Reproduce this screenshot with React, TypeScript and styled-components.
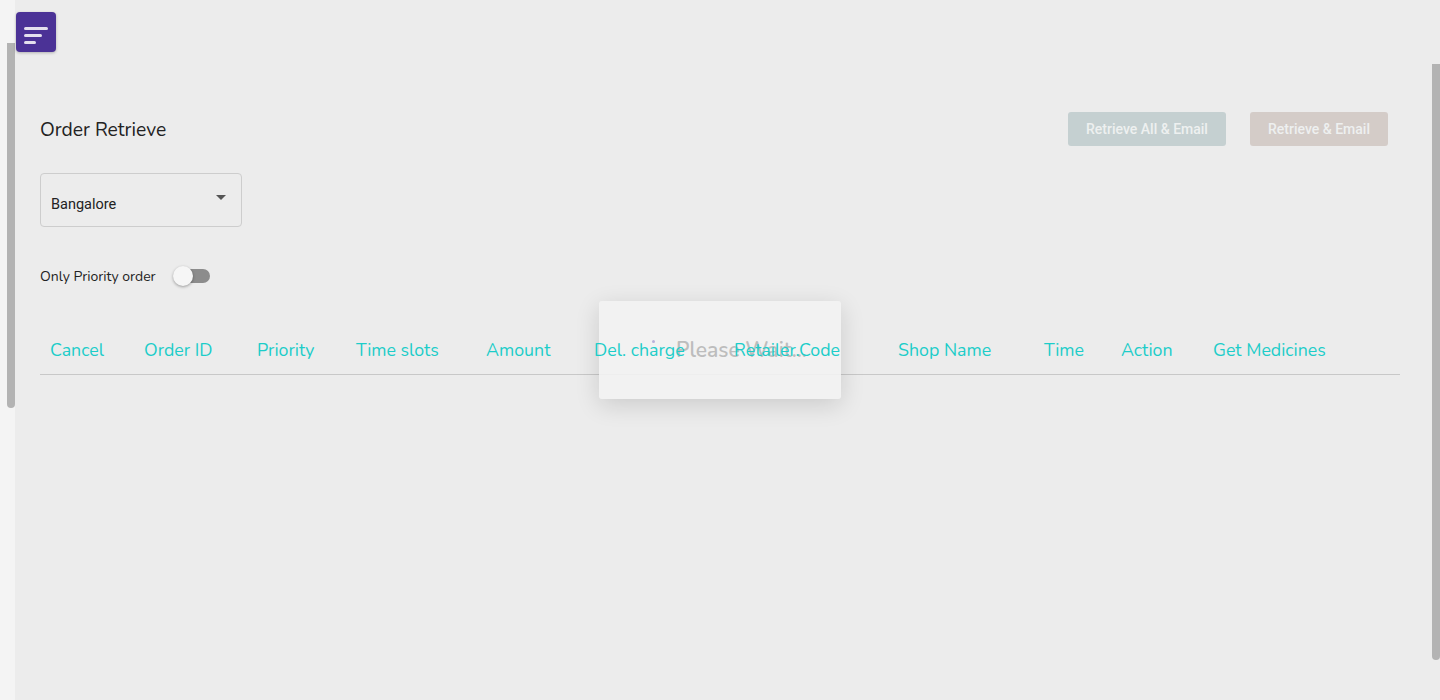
import React from "react";
import styled, { createGlobalStyle } from "styled-components";

const Global = createGlobalStyle`
  html, body { margin: 0; padding: 0; height: 100%; }
  body { background: #ececec; font-family: "Nunito", "Lato", "Open Sans", sans-serif; overflow: hidden; }
  #root { height: 700px; }
`;

const Shell = styled.div`
  display: flex;
  height: 700px;
  width: 1440px;
`;

const LeftRail = styled.div`
  width: 15px;
  flex: none;
  background: #f4f4f4;
  display: flex;
  flex-direction: column;
  align-items: flex-end;
`;

const Thumb = styled.div<{ $top: number; $h: number }>`
  width: 8px;
  margin-top: ${(p) => p.$top}px;
  height: ${(p) => p.$h}px;
  background: #b3b3b3;
  border-radius: 0 0 4px 4px;
`;

const Main = styled.div`
  flex: 1;
  display: flex;
  position: relative;
`;

const Content = styled.div`
  flex: 1;
  display: flex;
  flex-direction: column;
  padding: 0 0 0 25px;
`;

const RightRail = styled.div`
  width: 8px;
  flex: none;
  display: flex;
  flex-direction: column;
`;

const MenuButton = styled.button`
  position: absolute;
  left: 1px;
  top: 12px;
  width: 40px;
  height: 40px;
  border: none;
  border-radius: 4px;
  background: #4b3296;
  box-shadow: 0 1px 3px rgba(0, 0, 0, 0.25);
  display: flex;
  flex-direction: column;
  justify-content: center;
  align-items: flex-start;
  gap: 4px;
  padding: 6px 0 0 8px;
  cursor: pointer;
`;

const MenuLine = styled.span<{ $w: number }>`
  display: block;
  width: ${(p) => p.$w}px;
  height: 3px;
  border-radius: 2px;
  background: #e4e0ee;
`;

const HeaderRow = styled.div`
  display: flex;
  align-items: center;
  justify-content: space-between;
  margin-top: 112px;
  height: 34px;
  padding-right: 44px;
`;

const Title = styled.h1`
  margin: 0;
  font-size: 19.3px;
  font-weight: 400;
  color: #222;
  padding-top: 1px;
`;

const ButtonGroup = styled.div`
  display: flex;
  gap: 24px;
`;

const ActionButton = styled.button<{ $bg: string; $w: number }>`
  width: ${(p) => p.$w}px;
  height: 34px;
  border: none;
  border-radius: 3px;
  background: ${(p) => p.$bg};
  color: #eef0f0;
  font-family: Roboto, "Liberation Sans", sans-serif;
  font-size: 14px;
  font-weight: 500;
  padding: 0;
`;

const Select = styled.div`
  margin-top: 27px;
  border: 1px solid #cdcdcd;
  border-radius: 4px;
  display: flex;
  align-items: center;
  justify-content: space-between;
  padding: 8px 15px 0 10px;
  box-sizing: border-box;
  width: 202px;
  height: 54px;
  font-family: Roboto, "Liberation Sans", sans-serif;
  font-size: 14.5px;
  color: #222;
`;

const Caret = styled.span`
  width: 0;
  height: 0;
  border-left: 5px solid transparent;
  border-right: 5px solid transparent;
  border-top: 5px solid #555;
  margin-top: -14px;
`;

const ToggleRow = styled.div`
  display: flex;
  align-items: center;
  margin-top: 38px;
  height: 22px;
  gap: 20px;
  font-size: 14px;
  color: #222;
`;

const Track = styled.div`
  position: relative;
  width: 34px;
  height: 14px;
  border-radius: 7px;
  background: #8c8c8c;
`;

const Knob = styled.div`
  position: absolute;
  left: -3px;
  top: -3px;
  width: 20px;
  height: 20px;
  border-radius: 50%;
  background: #f6f6f6;
  box-shadow: 0 1px 3px rgba(0, 0, 0, 0.35);
`;

const Table = styled.div`
  margin-top: 40px;
  width: 1360px;
  display: grid;
  grid-template-columns: 94px 113px 99px 130px 108px 140px 164px 146px 77px 92px 197px;
  border-bottom: 1px solid #c8c8c8;
`;

const HeadCell = styled.div`
  padding: 11px 0 12px 10px;
  font-size: 17.8px;
  line-height: 24px;
  color: #1ccdc9;
  white-space: nowrap;
  position: relative;
  z-index: 2;
`;

const Dialog = styled.div`
  position: absolute;
  left: 584px;
  top: 301px;
  width: 242px;
  height: 98px;
  background: rgba(243, 243, 243, 0.88);
  border-radius: 3px;
  box-shadow: 0 6px 24px rgba(0, 0, 0, 0.14);
  display: flex;
  align-items: center;
  gap: 21px;
  padding-left: 53px;
  box-sizing: border-box;
  z-index: 1;
`;

const Spinner = styled.span`
  width: 3px;
  height: 3px;
  border-radius: 50%;
  background: #b9b0da;
  margin-top: -18px;
`;

const WaitText = styled.span`
  font-size: 21px;
  font-weight: 600;
  color: #bdbdbd;
  white-space: nowrap;
`;

const columns = [
  "Cancel",
  "Order ID",
  "Priority",
  "Time slots",
  "Amount",
  "Del. charge",
  "Retailer.Code",
  "Shop Name",
  "Time",
  "Action",
  "Get Medicines",
];

export default function App() {
  return (
    <>
      <Global />
      <Shell>
        <LeftRail>
          <Thumb $top={43} $h={365} />
        </LeftRail>
        <Main>
          <MenuButton aria-label="menu">
            <MenuLine $w={24} />
            <MenuLine $w={18} />
            <MenuLine $w={12} />
          </MenuButton>
          <Content>
            <HeaderRow>
              <Title>Order Retrieve</Title>
              <ButtonGroup>
                <ActionButton $bg="#c5d0d1" $w={158}>Retrieve All &amp; Email</ActionButton>
                <ActionButton $bg="#d4ccc8" $w={138}>Retrieve &amp; Email</ActionButton>
              </ButtonGroup>
            </HeaderRow>
            <Select>
              <span>Bangalore</span>
              <Caret />
            </Select>
            <ToggleRow>
              <span>Only Priority order</span>
              <Track>
                <Knob />
              </Track>
            </ToggleRow>
            <Table>
              {columns.map((c) => (
                <HeadCell key={c}>{c}</HeadCell>
              ))}
            </Table>
          </Content>
          <Dialog>
            <Spinner />
            <WaitText>Please Wait...</WaitText>
          </Dialog>
          <RightRail>
            <Thumb $top={64} $h={596} />
          </RightRail>
        </Main>
      </Shell>
    </>
  );
}
